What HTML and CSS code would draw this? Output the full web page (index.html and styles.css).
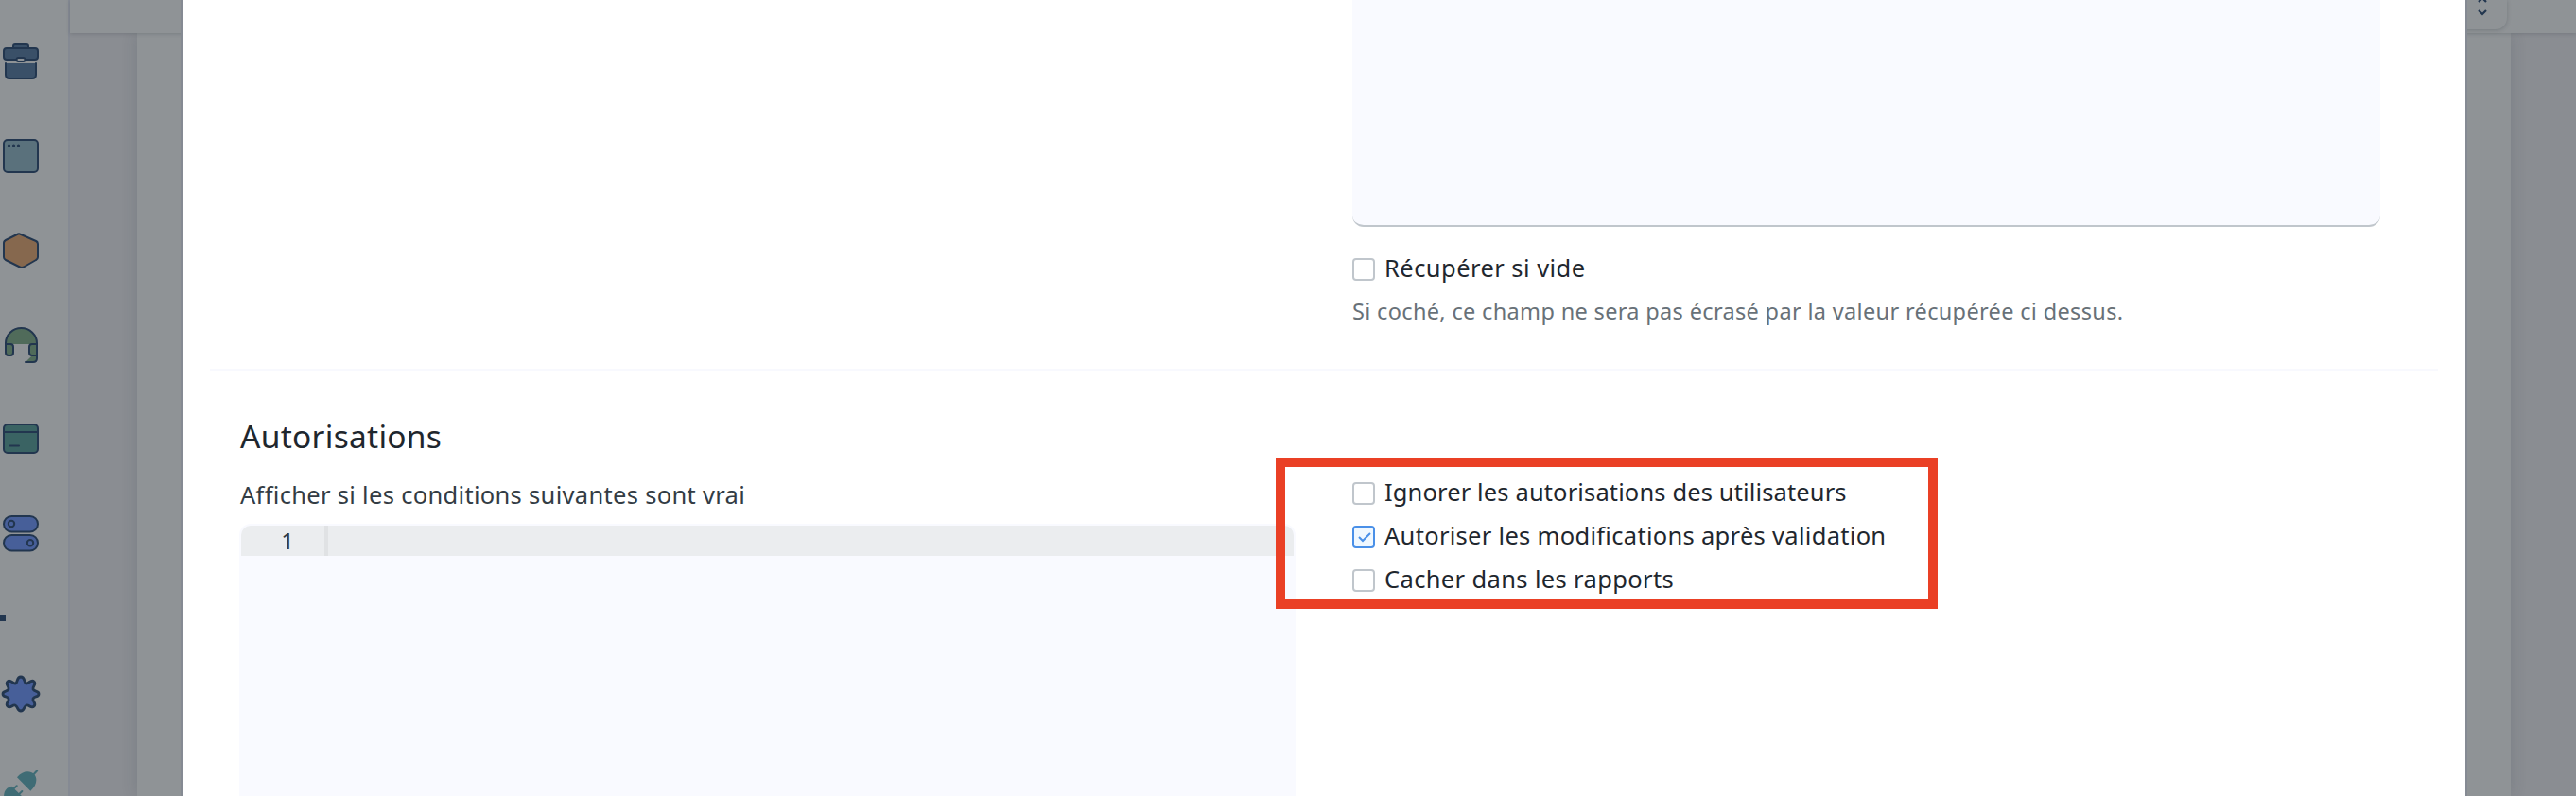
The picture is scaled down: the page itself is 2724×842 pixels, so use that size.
FILE: index.html
```html
<!DOCTYPE html>
<html lang="fr">
<head>
<meta charset="utf-8">
<title>Autorisations</title>
<link rel="stylesheet" href="styles.css">
</head>
<body>
<div class="app">
  <nav class="sidebar">
    <svg class="icon" viewBox="0 0 42 42"><path class="navy" d="M12 6V4q0-2 2-2h12q2 0 2 2v2M4 22v12q0 4 4 4h24q4 0 4-4V22"/><rect class="navy" x="2" y="6" width="36" height="12" rx="3"/><rect class="clasp" x="15.500" y="16" width="9" height="4" rx="2"/></svg>
    <svg class="icon" viewBox="0 0 42 42"><rect class="steel" x="2" y="3" width="36" height="34" rx="4"/><path class="dots" d="M7.500 9h.01M12.500 9h.01M17.500 9h.01"/></svg>
    <svg class="icon" viewBox="0 0 42 42"><path class="brown" d="M19 2.500Q18 2 17 2.500L4 9Q2 10 2 12v15q0 2 2 3l15 7.500q2 1 4 0L36 30q2-1 2-3V13q0-2-2-3Z"/></svg>
    <svg class="icon" viewBox="0 0 42 42"><path class="greenfill" d="M4 19v-1a16.500 16 0 0 1 33 0v1ZM37 29v5q0 4-4 4h-8l6-6Z"/><path class="line" d="M4 19v-1a16.500 16 0 0 1 33 0v16q0 4-4 4h-8"/><path class="green" d="M4 19h5q3 0 3 3v6q0 3-3 3H7q-3 0-3-3ZM37 19h-5q-3 0-3 3v6q0 3 3 3h5Z"/></svg>
    <svg class="icon" viewBox="0 0 42 42"><rect class="teal" x="2" y="4" width="36" height="30" rx="4"/><path class="line" d="M2 12h36M8.500 26.500H18"/></svg>
    <svg class="icon" viewBox="0 0 42 42"><rect class="blue" x="2" y="1" width="36" height="16.500" rx="8.200"/><rect class="blue" x="2" y="21" width="36" height="16.500" rx="8.200"/><circle class="line" cx="10" cy="9" r="3.200"/><circle class="line" cx="30" cy="29.200" r="3.200"/></svg>
    <span class="tick"></span>
    <svg class="icon" viewBox="0 0 42 42"><path class="blue gear" d="M20 2c5 0 3 7 6 7s5-5 8-2-2 5-1 8 6 1 6 5-5 2-6 5 4 5 1 8-5-2-8-1-2 6-6 6-3-5-6-6-5 4-8 1 2-5 1-8-6-1-6-5 5-2 6-5-4-5-1-8 5 2 8 2 1-7 6-7Z"/></svg>
    <svg class="icon plug" viewBox="0 0 42 42"><path d="M16 8.300C22 1 30 1 34 5S37 17 30.300 22.700ZM2 30C2 22 5 19 10.300 17.700L22 29v4H2Z"/><path class="pins" d="m33.500 5.300 3.700-4M12 20.800l3.700-3.500M17.500 26.800l3.800-3.800"/></svg>
  </nav>
  <div class="main">
    <header class="topbar"><div class="toggle"><svg viewBox="0 0 12 24"><path d="m2 8 4-4 4 4M2 17l4 4 4-4"/></svg></div></header>
    <div class="page"><div class="sheet"></div></div>
  </div>
</div>
<main class="modal">
  <section class="fetch">
    <div class="textarea"></div>
    <label class="check empty"><span class="box"></span><span class="txt">Récupérer si vide</span></label>
    <p class="help"><span class="txt">Si coché, ce champ ne sera pas écrasé par la valeur récupérée ci dessus.</span></p>
  </section>
  <section class="perms">
    <div class="left">
      <h2><span class="txt">Autorisations</span></h2>
      <p class="label"><span class="txt">Afficher si les conditions suivantes sont vrai</span></p>
      <div class="editor"><div class="line-active"><span class="gutter">1</span></div></div>
    </div>
    <div class="right">
      <label class="check ignore"><span class="box"></span><span class="txt">Ignorer les autorisations des utilisateurs</span></label>
      <label class="check allow"><span class="box on"><svg viewBox="0 0 20 20"><path d="m5 10 4 4 8-8"/></svg></span><span class="txt">Autoriser les modifications après validation</span></label>
      <label class="check hide"><span class="box"></span><span class="txt">Cacher dans les rapports</span></label>
    </div>
  </section>
</main>
<div class="highlight"></div>
</body>
</html>
```
FILE: styles.css
```css
* { box-sizing: border-box; }
body { margin: 0; width: 2724px; height: 842px; overflow: hidden; position: relative; font-family: "Noto Sans", "Open Sans", sans-serif; color: #1f272e; }
h2, p { margin: 0; font-weight: 400; }
.txt { white-space: nowrap; }

/* Dimmed application behind the dialog */
.app { display: flex; width: 2724px; height: 842px; background: #8f9396; }
.sidebar { width: 74px; height: 842px; flex: none; border-right: 2px solid #858a93; padding: 45px 0 0 2px; display: flex; flex-direction: column; align-items: flex-start; overflow: hidden; }
.icon { width: 42px; height: 42px; flex: none; margin-bottom: 58px; overflow: visible; }
.icon * { stroke: #22364f; stroke-width: 2; stroke-linecap: round; stroke-linejoin: round; }
.navy { fill: #3a5068; }
.clasp { fill: #8f9396; }
.steel { fill: #5a717c; }
.icon .dots { stroke-width: 3.2; }
.brown { fill: #86684e; }
.icon .greenfill { fill: #506b5a; stroke: none; }
.green { fill: #506b5a; }
.teal { fill: #3a6363; }
.blue { fill: #475f99; }
.icon .gear { stroke-width: 2.8; }
.line { fill: none; }
.icon.plug { fill: #3f6c75; }
.icon.plug path { stroke: none; }
.icon.plug .pins { stroke: #3f6c75; stroke-width: 2; }
.tick { width: 6px; height: 6px; margin: 6px 0 57px -2px; background: #22364f; flex: none; }
.main { flex: 1; display: flex; flex-direction: column; }
.topbar { height: 35px; flex: none; display: flex; justify-content: flex-end; padding-right: 73px; background: #8f9396; box-shadow: 0 1px 4px rgba(40, 50, 60, .22); position: relative; }
.toggle { width: 80px; height: 31px; border-radius: 0 0 12px 0; box-shadow: 0 1px 4px rgba(40, 50, 60, .25); display: flex; justify-content: flex-end; padding: 0 20px 0 0; }
.toggle svg { width: 12px; height: 24px; margin-top: -6px; fill: none; stroke: #22364f; stroke-width: 2.2; }
.page { flex: 1; background: #8a8d92; padding: 0 69px 0 71px; display: flex; }
.sheet { flex: 1; background: #8f9396; box-shadow: 0 0 16px rgba(40, 50, 60, .16); }

/* Dialog */
.modal { position: absolute; left: 193px; top: 0; width: 2414px; height: 842px; background: #fff; box-shadow: 0 0 0 2px #858a93; overflow: hidden; }
.fetch { margin: 0 29px; height: 392px; border-bottom: 2px solid #f8f9fe; padding: 0 61px 0 1208px; }
.textarea { height: 240px; background: #f9faff; border-bottom: 2px solid #c0c6cc; border-radius: 0 0 12px 12px; }
.check { display: flex; align-items: center; gap: 10px; height: 46px; font-size: 25.5px; line-height: 43px; }
.check .txt { height: 46px; }
.fetch .check { margin-top: 22px; }
.empty { letter-spacing: .45px; }
.ignore { letter-spacing: .13px; }
.allow { letter-spacing: .3px; }
.hide { letter-spacing: .36px; }
.box { width: 24px; height: 24px; flex: none; border: 2px solid #c0c6cc; border-radius: 4px; background: #fff; display: block; }
.box.on { border-color: #4a90e8; background: #f0f8ff; }
.box svg { display: block; width: 20px; height: 20px; fill: none; stroke: #4a90e8; stroke-width: 2; }
.help { margin-top: 1px; font-size: 23.5px; line-height: 40px; letter-spacing: .34px; color: #687178; }
.perms { display: grid; grid-template-columns: 1117px 1fr; column-gap: 60px; padding: 0 0 0 60px; }
.left { padding-top: 44px; }
h2 { font-size: 33.5px; line-height: 50px; letter-spacing: .28px; padding-left: 1px; }
.label { margin-top: 15px; height: 53px; font-size: 25.5px; line-height: 44px; letter-spacing: .31px; padding-left: 1px; color: #333c44; }
.editor { height: 300px; border: 2px solid #f9faff; border-radius: 12px; background: #f9faff; overflow: hidden; }
.line-active { height: 32px; background: #ebedef; }
.gutter { display: block; width: 92px; height: 32px; border-right: 4px solid #e0e2e4; padding-right: 32px; text-align: right; font-size: 24px; line-height: 32px; color: #333c44; }
.right { padding-top: 107px; }
.highlight { position: absolute; left: 1349px; top: 484px; width: 700px; height: 160px; border: 10px solid #ea4025; }
```
